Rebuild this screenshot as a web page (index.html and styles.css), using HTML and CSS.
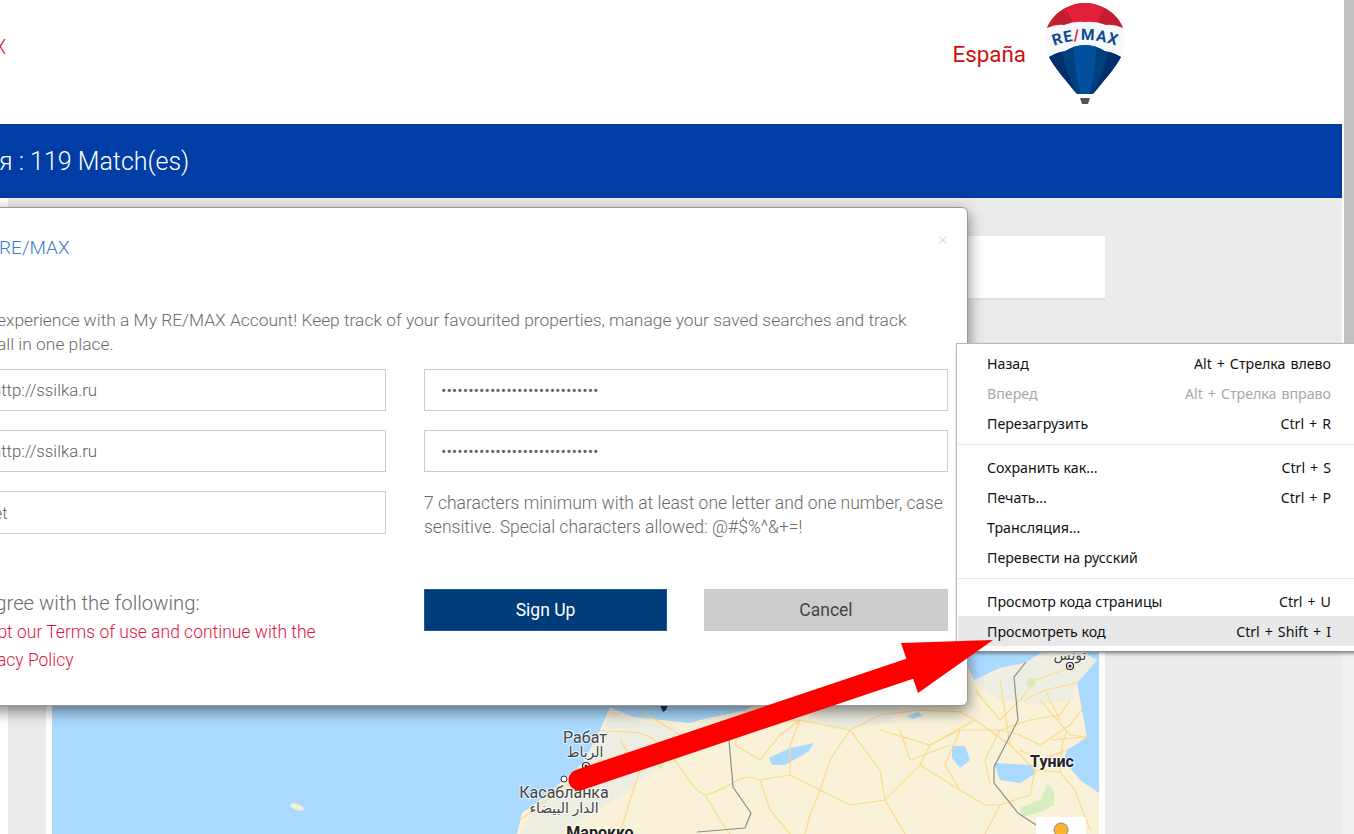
FILE: index.html
```html
<!DOCTYPE html>
<html lang="en">
<head>
    <meta charset="UTF-8">
    <meta name="viewport" content="width=device-width, initial-scale=1.0">
    <title>RE/MAX España</title>
    <link rel="stylesheet" href="styles.css">
</head>
<body>
    <div class="window">
        <div class="page">
            <div class="header">
                <span class="brand">RE/MAX</span>
                <span class="country">España</span>
                <svg class="balloon" width="80" height="106" viewBox="1045 0 80 106">
                    <path d="M1085 3C1066 3 1051 16 1047 28L1123 28C1119 16 1104 3 1085 3Z" fill="#c41c30"/>
                    <path d="M1085 3C1076 3 1070 6 1065 10C1070 14 1072 20 1072 24L1098 24C1098 20 1100 14 1105 10C1100 6 1094 3 1085 3Z" fill="#e2203a"/>
                    <path d="M1047 28Q1056 24 1064 25Q1074 21 1085 22Q1096 21 1106 25Q1114 24 1123 28Q1125 34 1124 40Q1124 50 1121 57Q1112 52 1105 51Q1096 45 1085 45Q1074 45 1065 51Q1058 52 1049 57Q1046 50 1046 40Q1045 34 1047 28Z" fill="#f6f8fb"/>
                    <path d="M1049 57Q1058 52 1065 51Q1074 45 1085 45Q1096 45 1105 51Q1112 52 1121 57C1116 67 1102 83 1093 94L1077 94C1068 83 1054 67 1049 57Z" fill="#00407f"/>
                    <path d="M1049 57Q1058 52 1062 52C1065 68 1072 84 1077 94C1068 83 1054 67 1049 57Z" fill="#002f6c"/>
                    <path d="M1121 57Q1112 52 1108 52C1105 68 1098 84 1093 94C1102 83 1116 67 1121 57Z" fill="#002f6c"/>
                    <path d="M1074 47Q1085 43 1096 47C1096 66 1092 84 1089 94L1081 94C1078 84 1074 66 1074 47Z" fill="#00509e"/>
                    <path d="M1080 98L1090 98L1088 104L1082 104Z" fill="#555"/>
                    <path id="balloonCurve" d="M1054 46Q1085 34 1117 46" fill="none"/>
                    <text class="balloon-text"><textPath href="#balloonCurve" startOffset="50%" text-anchor="middle">RE<tspan fill="#d8202f">/</tspan>MAX</textPath></text>
                </svg>
            </div>

            <div class="result-bar">
                <span class="result-text">Россия : 119 Match(es)</span>
            </div>

            <div class="content">
                <div class="gutter"></div>
                <div class="main">
                    <div class="search-card"></div>
                    <div class="map-panel">
                        <svg class="map" width="1047" height="474" viewBox="52 360 1047 474">
                            <rect x="52" y="360" width="1047" height="474" fill="#aadaff"/>
                            <ellipse cx="297" cy="807" rx="7" ry="3" fill="#f6efcf" transform="rotate(20 297 807)"/>
                            <path class="land" d="M517 834L522 813L540 800L557 787L583 763L600 730L610 707L633 717L663 720L690 723L700 720L745 710L757 703L760 660L960 650L974 680L1000 668L1025 663L1045 655L1061 640L1097 660L1088 670L1077 683L1082 710L1087 737L1075 745L1067 750L1062 765L1070 768L1080 780L1099 793L1099 834Z"/>
                            <path class="terrain" d="M540 800L583 763L605 725L612 712L640 722L680 728L665 760L630 790L590 815L560 834L520 834Z"/>
                            <path class="terrain" d="M974 680L1025 663L1061 640L1097 660L1077 683L1072 700L1040 705L1000 700Z"/>
                            <path class="terrain" d="M800 706L900 706L890 722L835 730Z"/>
                            <path class="water" d="M994 763L1033 765L1036 773L1020 783L1000 780Z"/>
                            <path class="water" d="M769 758L790 748L814 743L808 752L785 765L772 765Z"/>
                            <path class="water" d="M952 746L965 746L970 760L960 768L952 758Z"/>
                            <path class="water" d="M907 716L918 712L923 716L912 719Z"/>
                            <path class="green" d="M1020 808L1040 800L1048 784L1054 790L1054 805L1040 812L1022 817Z"/>
                            <path class="green" d="M655 765L664 760L662 770Z"/>
                            <path class="green" d="M1028 678L1036 678L1035 686L1026 685Z"/>
                            <path class="road" d="M600 730C620 735 640 725 660 745C680 760 690 790 705 795C730 790 740 770 760 780L790 775L820 790L850 805L885 800L920 765L930 745L960 730L1000 730L1030 720L1060 715L1070 700"/>
                            <path class="road" d="M620 740L640 770L630 800L620 834M660 745L700 735L745 725L800 720L850 730L880 770L885 800L905 834"/>
                            <path class="road" d="M705 795L720 820L730 834M760 780L770 810L790 834M820 790L810 815L805 834M850 730L830 760L820 790M800 720L790 745L790 775"/>
                            <path class="road" d="M880 730L930 745L975 720L1010 745L1035 770L1030 795L1000 805L985 834M920 765L960 790L985 805L1000 805"/>
                            <path class="road" d="M975 690L1000 720L1020 700L1035 680L1070 668M1000 680L1010 745M1040 700L1070 735L1087 737M1040 745L1070 725L1082 710"/>
                            <path class="road" d="M1035 770L1060 772L1075 790L1090 830M1060 772L1062 745L1067 730M520 820L560 790L600 760L640 770M640 710L680 735"/>
                            <path class="road" d="M740 725L735 745L760 760L780 735L800 720M850 730L880 715L920 710L960 712L975 720M900 730L910 760L950 745M960 730L945 765L960 790M1000 730L985 760L990 785"/>
                            <path class="road" d="M1025 700L1045 690L1077 683M1040 745L1020 735L1000 730M1045 690L1060 720M1050 740L1087 737M1067 750L1040 760L1020 750"/>
                            <path class="border" d="M729 740L733 787L751 813L745 828L697 832M1026 662L1014 677L1018 720L994 767L994 783L1018 813L1036 825"/>
                            <path d="M660 705L668 705L666 710L663 712Z" fill="#1a2f6b"/>
                            <g class="labels">
                                <text x="585" y="743" text-anchor="middle">Рабат</text>
                                <text x="585" y="757" text-anchor="middle" class="arabic">الرباط</text>
                                <text x="564" y="798" text-anchor="middle">Касабланка</text>
                                <text x="564" y="813" text-anchor="middle" class="arabic">الدار البيضاء</text>
                                <text x="600" y="838" text-anchor="middle" class="bold">Марокко</text>
                                <text x="1052" y="767" text-anchor="middle" class="bold">Тунис</text>
                                <text x="1070" y="660" text-anchor="middle" class="arabic">تونس</text>
                            </g>
                            <circle cx="586" cy="766" r="3.5" fill="#fff" stroke="#222" stroke-width="1.2"/>
                            <circle cx="586" cy="766" r="1.5" fill="#222"/>
                            <circle cx="564" cy="779" r="3" fill="#fff" stroke="#333"/>
                            <circle cx="1070" cy="666" r="3.5" fill="#fff" stroke="#222" stroke-width="1.2"/>
                            <circle cx="1070" cy="666" r="1.5" fill="#222"/>
                            <rect x="1036" y="817" width="50" height="20" rx="2" fill="#fff"/>
                            <circle cx="1061" cy="830" r="7" fill="#fdb52f" stroke="#8a8a8a"/>
                        </svg>
                    </div>
                </div>
            </div>
        </div>
        <div class="scrollbar"><div class="thumb"></div></div>
    </div>

    <div class="modal">
        <div class="modal-head">
            <h4 class="modal-title">RE/MAX</h4>
            <span class="close">×</span>
        </div>
        <p class="intro">experience with a My RE/MAX Account! Keep track of your favourited properties, manage your saved searches and track<br>all in one place.</p>
        <form class="signup">
            <input class="field field-url" type="text" value="http://ssilka.ru">
            <input class="field" type="password" value="abcdefghijklmnopqrstuvwxyzabc">
            <input class="field field-url" type="text" value="http://ssilka.ru">
            <input class="field" type="password" value="abcdefghijklmnopqrstuvwxyzabc">
            <input class="field field-short" type="text" value="Street">
            <p class="hint">7 characters minimum with at least one letter and one number, case sensitive. Special characters allowed: @#$%^&amp;+=!</p>
            <div class="terms">
                <div class="terms-title">I agree with the following:</div>
                <a class="terms-link" href="#">I accept our Terms of use and continue with the</a>
                <a class="terms-link privacy" href="#">Privacy Policy</a>
            </div>
            <div class="actions">
                <button type="button" class="btn-primary">Sign Up</button>
                <button type="button" class="btn-cancel">Cancel</button>
            </div>
        </form>
    </div>

    <div class="context-menu">
        <div class="menu-item"><span>Назад</span><span>Alt + Стрелка влево</span></div>
        <div class="menu-item disabled"><span>Вперед</span><span>Alt + Стрелка вправо</span></div>
        <div class="menu-item"><span>Перезагрузить</span><span>Ctrl + R</span></div>
        <div class="menu-sep"></div>
        <div class="menu-item"><span>Сохранить как...</span><span>Ctrl + S</span></div>
        <div class="menu-item"><span>Печать...</span><span>Ctrl + P</span></div>
        <div class="menu-item"><span>Трансляция...</span></div>
        <div class="menu-item"><span>Перевести на русский</span></div>
        <div class="menu-sep"></div>
        <div class="menu-item"><span>Просмотр кода страницы</span><span>Ctrl + U</span></div>
        <div class="menu-item active"><span>Просмотреть код</span><span>Ctrl + Shift + I</span></div>
    </div>

    <svg class="arrow" width="1354" height="834" viewBox="0 0 1354 834">
        <line x1="579" y1="780" x2="912" y2="668" stroke="#ff0000" stroke-width="21" stroke-linecap="round"/>
        <polygon points="901,643 993,640 918,693" fill="#ff0000"/>
    </svg>
</body>
</html>
```

FILE: styles.css
```css
* {
    margin: 0;
    padding: 0;
    box-sizing: border-box;
}

body {
    font-family: 'Roboto', sans-serif;
    font-weight: 300;
    color: #6b6b6b;
    background: #fff;
    height: 834px;
    overflow: hidden;
}

.window {
    display: flex;
    height: 834px;
    overflow: hidden;
}

.page {
    flex: 1;
    display: flex;
    flex-direction: column;
    min-width: 0;
}

.scrollbar {
    width: 12px;
    background: #f1f1f1;
}

.thumb {
    height: 345px;
    background: #c1c1c1;
    border-left: 2px solid #fff;
}

.header {
    height: 124px;
    flex-shrink: 0;
    display: flex;
    align-items: center;
    padding-right: 217px;
}

.brand {
    font-size: 20px;
    color: #e0202e;
    margin-left: -68px;
    margin-bottom: 30px;
}

.country {
    margin-left: auto;
    margin-right: 19px;
    margin-bottom: 16px;
    font-size: 22.4px;
    font-weight: 400;
    color: #cc0f0f;
}

.balloon {
    align-self: flex-start;
}

.balloon-text {
    font-family: 'Roboto', sans-serif;
    font-size: 15.5px;
    font-weight: 700;
    letter-spacing: 1px;
    fill: #0b4a96;
}

.result-bar {
    height: 74px;
    flex-shrink: 0;
    display: flex;
    align-items: center;
    background: #003da5;
}

.result-text {
    font-size: 25px;
    color: #fff;
    white-space: nowrap;
    margin-left: -70px;
}

.content {
    flex: 1;
    display: flex;
    min-height: 0;
}

.gutter {
    width: 8px;
    background: #fff;
}

.main {
    flex: 1;
    background: #ebebeb;
    padding: 38px 237px 0 38px;
    overflow: hidden;
}

.search-card {
    height: 64px;
    background: #fff;
    border-bottom: 2px solid #e0e0e0;
}

.map-panel {
    margin-top: 60px;
    padding: 0 6px;
    height: 600px;
    background: #fff;
}

.map {
    display: block;
}

.land {
    fill: #f9f1d8;
}

.terrain {
    fill: #eeede2;
}

.water {
    fill: #aadaff;
}

.green {
    fill: #d6edc0;
}

.road {
    fill: none;
    stroke: #fdd98a;
    stroke-width: 1.2;
}

.border {
    fill: none;
    stroke: #8e8e8e;
    stroke-width: 1.2;
}

.labels text {
    font-family: 'Roboto', 'DejaVu Sans', sans-serif;
    font-size: 16px;
    font-weight: 400;
    fill: #444;
    stroke: #fff;
    stroke-width: 2px;
    stroke-opacity: 0.7;
    paint-order: stroke;
}

.labels .arabic {
    font-size: 14px;
}

.labels .bold {
    font-weight: 700;
    fill: #222;
}

.modal {
    position: absolute;
    top: 207px;
    left: -69px;
    width: 1037px;
    padding: 28px 19px 31px 18px;
    background: #fff;
    border: 1px solid #999;
    border-radius: 6px;
    box-shadow: 0 5px 15px rgba(0, 0, 0, 0.5);
}

.modal-head {
    display: flex;
    justify-content: space-between;
    align-items: flex-start;
}

.modal-title {
    font-size: 19px;
    font-weight: 300;
    line-height: 24px;
    color: #3f78cc;
    margin-left: 49px;
}

.close {
    font-size: 19px;
    line-height: 16px;
    color: #d8d8d8;
    margin-top: -5px;
}

.intro {
    margin-top: 48px;
    margin-left: 47px;
    font-size: 17.4px;
    line-height: 24px;
    white-space: nowrap;
}

.signup {
    margin-top: 13px;
    display: grid;
    grid-template-columns: 436px 524px;
    column-gap: 38px;
    row-gap: 19px;
    align-items: start;
}

.field {
    height: 42px;
    width: 100%;
    padding: 0 16px;
    font-family: inherit;
    font-size: 16.8px;
    font-weight: 300;
    color: #5f5f5f;
    background: #fff;
    border: 1px solid #ccc;
    outline: none;
}

.field-url {
    padding-left: 41px;
}

.field-short {
    height: 43px;
    padding-left: 13px;
}

.hint {
    font-size: 17.5px;
    line-height: 24px;
}

.terms {
    margin-top: 31px;
    font-size: 17.5px;
    line-height: 28px;
}

.terms-title {
    font-size: 20.3px;
    line-height: 29px;
    margin-left: 24px;
    white-space: nowrap;
}

.terms-link {
    display: block;
    color: #e0143c;
    text-decoration: none;
    white-space: nowrap;
    margin-left: 2px;
}

.privacy {
    margin-left: 18px;
}

.actions {
    margin-top: 31px;
    display: flex;
    gap: 37px;
}

.actions button {
    height: 42px;
    font-family: inherit;
    font-size: 17.5px;
    font-weight: 400;
    border: 1px solid transparent;
    cursor: pointer;
}

.btn-primary {
    flex: 0 0 243px;
    background: #003c7a;
    border-color: #1a5a96 !important;
    color: #fff;
}

.btn-cancel {
    flex: 1;
    background: #ccc;
    color: #444;
}

.context-menu {
    position: absolute;
    top: 343px;
    left: 956px;
    right: -2px;
    padding: 4px 0 5px 1px;
    background: #fff;
    border: 1px solid #b8b8b8;
    border-bottom-color: #8a8a8a;
    box-shadow: 1px 2px 3px rgba(0, 0, 0, 0.35);
    font-family: 'Noto Sans', sans-serif;
    font-weight: 400;
    font-size: 14.2px;
    color: #111;
}

.menu-item {
    height: 30px;
    padding: 0 24px 0 29px;
    display: flex;
    align-items: center;
    justify-content: space-between;
}

.menu-item span + span {
    word-spacing: 1.3px;
}

.menu-item.disabled {
    color: #a8a8a8;
}

.menu-item.active {
    background: #e8e8e8;
}

.menu-sep {
    height: 1px;
    background: #e6e6e6;
    margin: 6px 0 7px;
}

.arrow {
    position: absolute;
    top: 0;
    left: 0;
    pointer-events: none;
}
```
